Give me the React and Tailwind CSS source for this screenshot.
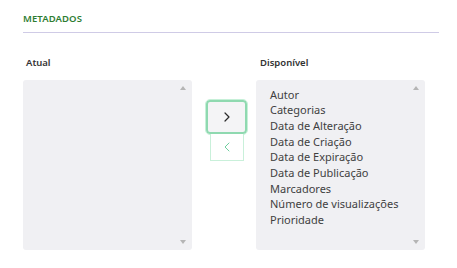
import { ChevronRight, ChevronLeft } from 'lucide-react';

const disponiveis = [
  'Autor',
  'Categorias',
  'Data de Alteração',
  'Data de Criação',
  'Data de Expiração',
  'Data de Publicação',
  'Marcadores',
  'Número de visualizações',
  'Prioridade',
];

const ListBox = ({ items }) => (
  <div className="relative h-[170px] w-[169px] rounded-[3px] bg-[#f0f0f3]">
    <ul className="pl-[14px] pt-[7px] text-[11px] leading-[15.7px] text-[#3f3f3f]">
      {items.map((item) => (
        <li key={item}>{item}</li>
      ))}
    </ul>
    {/* scrollbar arrows */}
    <span className="absolute right-[6px] top-[6px] h-0 w-0 border-x-[3px] border-b-[4px] border-x-transparent border-b-[#b5b5b5]" />
    <span className="absolute bottom-[6px] right-[6px] h-0 w-0 border-x-[3px] border-t-[4px] border-x-transparent border-t-[#b5b5b5]" />
  </div>
);

export default function App() {
  return (
    <div className="h-[268px] w-[457px] bg-white pl-[23px] pr-[18px] pt-[12px] font-['Noto_Sans',sans-serif]">
      <div className="border-b border-[#cfcbe6] pb-[6px]">
        <h2 className="text-[9.5px] font-semibold tracking-[0.1px] text-[#2e7d32]">METADADOS</h2>
      </div>

      <div className="mt-[23px] flex">
        <div className="flex flex-col">
          <span className="pl-[3px] text-[9.5px] font-semibold text-[#333]">Atual</span>
          <div className="mt-[9px]">
            <ListBox items={[]} />
          </div>
        </div>

        <div className="ml-[14px] mt-[44px] flex flex-col items-center">
          <button className="flex h-[34px] w-[41px] items-center justify-center rounded-[4px] border-2 border-[#8fd9b0] bg-[#f4f4f6] text-[#2a2a2a] outline outline-1 outline-[#c6f0d8]">
            <ChevronRight size={16} strokeWidth={1.8} />
          </button>
          <button className="flex h-[27px] w-[34px] items-center justify-center border border-t-0 border-[#c9f0da] bg-white text-[#6fcf9f]">
            <ChevronLeft size={16} strokeWidth={1.5} />
          </button>
        </div>

        <div className="ml-[9px] flex flex-col">
          <span className="pl-[4px] text-[9.5px] font-semibold text-[#333]">Disponível</span>
          <div className="mt-[9px]">
            <ListBox items={disponiveis} />
          </div>
        </div>
      </div>
    </div>
  );
}
